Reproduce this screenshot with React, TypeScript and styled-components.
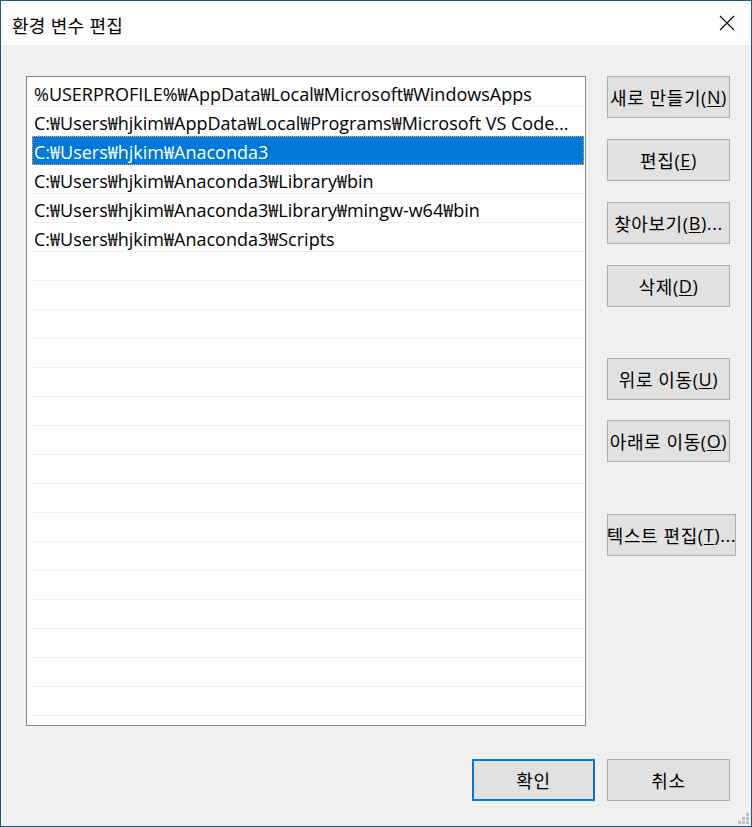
import React from "react";
import styled, { createGlobalStyle } from "styled-components";

const Global = createGlobalStyle`
  html, body { margin: 0; padding: 0; background: #f0f0f0; }
  * { box-sizing: border-box; }
`;

const FONT = `"Open Sans", "Noto Sans CJK KR", sans-serif`;

const Window = styled.div`
  position: relative;
  width: 752px;
  height: 827px;
  border: 1px solid #1a5b7a;
  display: flex;
  flex-direction: column;
  background: #f0f0f0;
  font-family: ${FONT};
  color: #000;
  overflow: hidden;
`;

const TitleBar = styled.div`
  height: 44px;
  background: #fff;
  display: flex;
  align-items: center;
  justify-content: space-between;
  padding-left: 11px;
  flex-shrink: 0;
`;

const Title = styled.div`
  font-size: 18px;
  letter-spacing: 0.3px;
  padding-top: 3px;
`;

const CloseBtn = styled.div`
  width: 46px;
  height: 44px;
  display: flex;
  align-items: center;
  justify-content: center;
  margin-right: 1px;
`;

const Body = styled.div`
  flex: 1;
  display: flex;
  flex-direction: column;
  padding: 31px 21px 0 25px;
`;

const Main = styled.div`
  display: flex;
  align-items: flex-start;
`;

const ListBox = styled.div`
  width: 560px;
  height: 650px;
  flex-shrink: 0;
  border: 1px solid #828790;
  background: #fff;
  padding: 1px 1px 0 5px;
  overflow: hidden;
  display: flex;
  flex-direction: column;
`;

const Row = styled.div<{ $selected?: boolean }>`
  height: 29px;
  flex-shrink: 0;
  border-bottom: 1px solid ${(p) => (p.$selected ? "#0078d7" : "#f0f0f0")};
  background: ${(p) => (p.$selected ? "#0078d7" : "transparent")};
  color: ${(p) => (p.$selected ? "#fff" : "#000")};
  outline: ${(p) => (p.$selected ? "1px dotted #f5a35b" : "none")};
  outline-offset: -1px;
  padding: 4px 0 0 2px;
  font-size: 18px;
  line-height: 24px;
  white-space: nowrap;
  overflow: hidden;
  text-overflow: ellipsis;
`;

const ButtonCol = styled.div`
  margin-left: 21px;
  display: flex;
  flex-direction: column;
  align-items: flex-start;
  flex-shrink: 0;
`;

const Button = styled.div<{ $gap?: number; $w?: number; $default?: boolean }>`
  margin-top: ${(p) => p.$gap ?? 0}px;
  width: ${(p) => p.$w ?? 123}px;
  height: 42px;
  flex-shrink: 0;
  background: #e1e1e1;
  border: ${(p) => (p.$default ? "2px solid #0078d7" : "1px solid #adadad")};
  display: flex;
  align-items: center;
  justify-content: center;
  font-size: 18px;
  letter-spacing: 0.6px;
  white-space: nowrap;
  padding-bottom: 1px;
`;

const Key = styled.span`
  text-decoration: underline;
  text-underline-offset: 2px;
  text-decoration-thickness: 1px;
`;

const Footer = styled.div`
  margin-top: 33px;
  display: flex;
  justify-content: flex-end;
  gap: 12px;
`;

const Grip = styled.svg`
  position: absolute;
  right: 1px;
  bottom: 1px;
`;

const rows = [
  "%USERPROFILE%₩AppData₩Local₩Microsoft₩WindowsApps",
  "C:₩Users₩hjkim₩AppData₩Local₩Programs₩Microsoft VS Code...",
  "C:₩Users₩hjkim₩Anaconda3",
  "C:₩Users₩hjkim₩Anaconda3₩Library₩bin",
  "C:₩Users₩hjkim₩Anaconda3₩Library₩mingw-w64₩bin",
  "C:₩Users₩hjkim₩Anaconda3₩Scripts",
];

export default function App() {
  const all = [...rows, ...Array.from({ length: 17 }, () => "")];
  return (
    <>
      <Global />
      <Window>
        <TitleBar>
          <Title>환경 변수 편집</Title>
          <CloseBtn>
            <svg width="16" height="16" viewBox="0 0 16 16">
              <path d="M1 1 L15 15 M15 1 L1 15" stroke="#000" strokeWidth="1.1" />
            </svg>
          </CloseBtn>
        </TitleBar>
        <Body>
          <Main>
            <ListBox>
              {all.map((t, i) => (
                <Row key={i} $selected={i === 2}>
                  {t}
                </Row>
              ))}
            </ListBox>
            <ButtonCol>
              <Button>
                새로 만들기(<Key>N</Key>)
              </Button>
              <Button $gap={21}>
                편집(<Key>E</Key>)
              </Button>
              <Button $gap={21}>
                찾아보기(<Key>B</Key>)...
              </Button>
              <Button $gap={21}>
                삭제(<Key>D</Key>)
              </Button>
              <Button $gap={51}>
                위로 이동(<Key>U</Key>)
              </Button>
              <Button $gap={20}>
                아래로 이동(<Key>O</Key>)
              </Button>
              <Button $gap={52} $w={129}>
                텍스트 편집(<Key>T</Key>)...
              </Button>
            </ButtonCol>
          </Main>
          <Footer>
            <Button $default>확인</Button>
            <Button>취소</Button>
          </Footer>
        </Body>
        <Grip width="12" height="12" viewBox="0 0 12 12">
          <g fill="#bfbfbf">
            <rect x="8" y="0" width="3" height="3" />
            <rect x="4" y="4" width="3" height="3" />
            <rect x="8" y="4" width="3" height="3" />
            <rect x="0" y="8" width="3" height="3" />
            <rect x="4" y="8" width="3" height="3" />
            <rect x="8" y="8" width="3" height="3" />
          </g>
        </Grip>
      </Window>
    </>
  );
}
